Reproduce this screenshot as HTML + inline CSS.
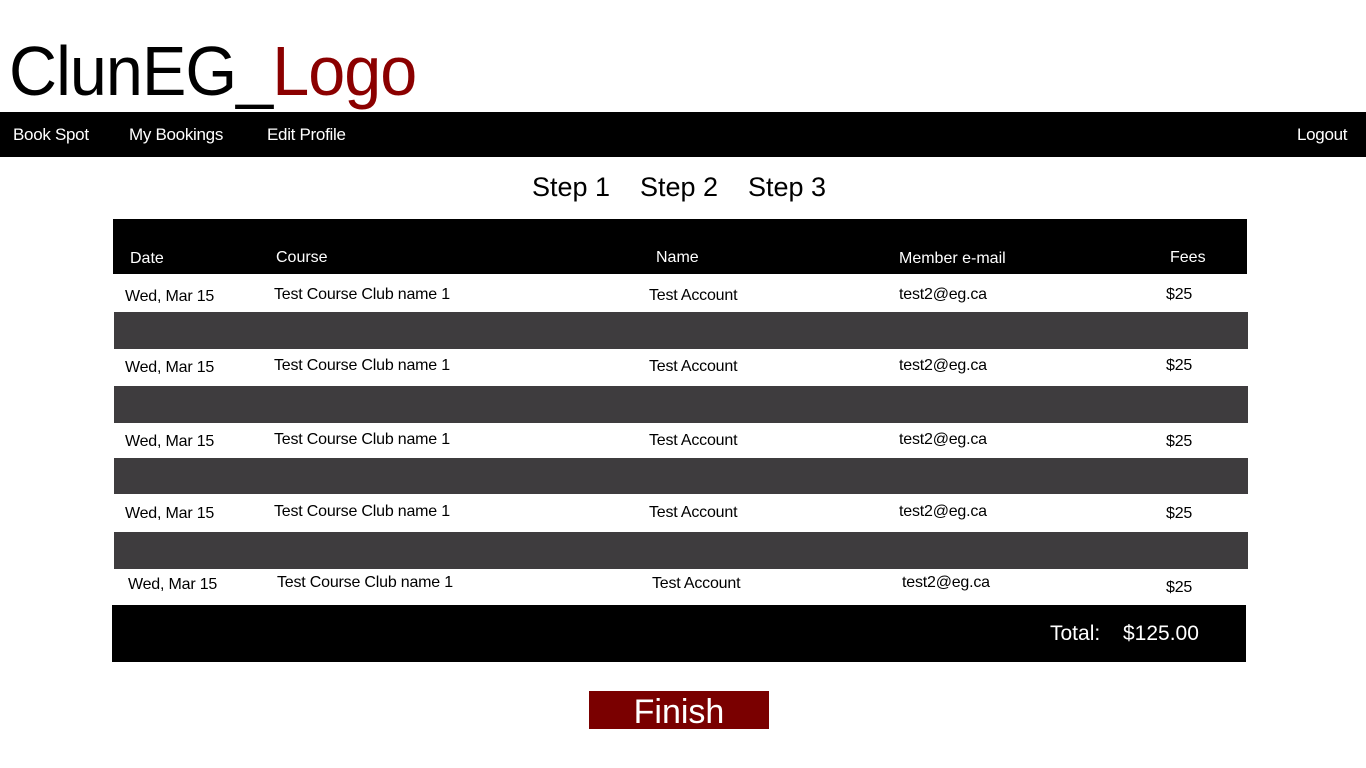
<!DOCTYPE html>
<html><head><meta charset="utf-8"><style>
body{margin:0;width:1366px;height:768px;background:#fff;position:relative;overflow:hidden;font-family:"Liberation Sans",sans-serif;}
.a{position:absolute;white-space:nowrap;}
.logo{left:9px;top:29px;font-size:70px;line-height:84px;color:#000;letter-spacing:-1px;transform:scaleX(0.95);transform-origin:0 0;}
.logo span{color:#8b0000;}
.nav{left:0;top:112px;width:1366px;height:45px;background:#000;}
.nl{color:#fff;font-size:17px;top:125px;letter-spacing:-0.3px;}
.steps{top:172px;font-size:27px;color:#000;}
.blk{background:#000;}
.gry{background:#3e3c3e;}
.h{color:#fff;font-size:16px;}
.t{color:#000;font-size:16px;letter-spacing:-0.2px;}
.fin{left:589px;top:691px;width:180px;height:38px;background:#7a0000;color:#fff;font-size:34px;text-align:center;line-height:43px;}
</style></head><body>
<div class="a logo">ClunEG_<span>Logo</span></div>
<div class="a nav"></div>
<div class="a nl" style="left:13px">Book Spot</div>
<div class="a nl" style="left:129px">My Bookings</div>
<div class="a nl" style="left:267px">Edit Profile</div>
<div class="a nl" style="left:1297px">Logout</div>
<div class="a steps" style="left:532px">Step 1</div>
<div class="a steps" style="left:640px">Step 2</div>
<div class="a steps" style="left:748px">Step 3</div>

<div class="a blk" style="left:113px;top:219px;width:1134px;height:55px"></div>
<div class="a h" style="left:130px;top:250px">Date</div>
<div class="a h" style="left:276px;top:249px">Course</div>
<div class="a h" style="left:656px;top:249px">Name</div>
<div class="a h" style="left:899px;top:250px">Member e-mail</div>
<div class="a h" style="left:1170px;top:249px">Fees</div>

<div class="a gry" style="left:114px;top:312px;width:1134px;height:37px"></div>
<div class="a gry" style="left:114px;top:386px;width:1134px;height:37px"></div>
<div class="a gry" style="left:114px;top:458px;width:1134px;height:36px"></div>
<div class="a gry" style="left:114px;top:532px;width:1134px;height:37px"></div>

<div class="a t" style="left:125px;top:288px">Wed, Mar 15</div>
<div class="a t" style="left:274px;top:286px">Test Course Club name 1</div>
<div class="a t" style="left:649px;top:287px">Test Account</div>
<div class="a t" style="left:899px;top:286px">test2@eg.ca</div>
<div class="a t" style="left:1166px;top:286px">$25</div>

<div class="a t" style="left:125px;top:359px">Wed, Mar 15</div>
<div class="a t" style="left:274px;top:357px">Test Course Club name 1</div>
<div class="a t" style="left:649px;top:358px">Test Account</div>
<div class="a t" style="left:899px;top:357px">test2@eg.ca</div>
<div class="a t" style="left:1166px;top:357px">$25</div>

<div class="a t" style="left:125px;top:433px">Wed, Mar 15</div>
<div class="a t" style="left:274px;top:431px">Test Course Club name 1</div>
<div class="a t" style="left:649px;top:432px">Test Account</div>
<div class="a t" style="left:899px;top:431px">test2@eg.ca</div>
<div class="a t" style="left:1166px;top:433px">$25</div>

<div class="a t" style="left:125px;top:505px">Wed, Mar 15</div>
<div class="a t" style="left:274px;top:503px">Test Course Club name 1</div>
<div class="a t" style="left:649px;top:504px">Test Account</div>
<div class="a t" style="left:899px;top:503px">test2@eg.ca</div>
<div class="a t" style="left:1166px;top:505px">$25</div>

<div class="a t" style="left:128px;top:576px">Wed, Mar 15</div>
<div class="a t" style="left:277px;top:574px">Test Course Club name 1</div>
<div class="a t" style="left:652px;top:575px">Test Account</div>
<div class="a t" style="left:902px;top:574px">test2@eg.ca</div>
<div class="a t" style="left:1166px;top:579px">$25</div>

<div class="a blk" style="left:112px;top:605px;width:1134px;height:57px"></div>
<div class="a" style="left:1050px;top:622px;color:#fff;font-size:21px">Total:</div>
<div class="a" style="left:1123px;top:622px;color:#fff;font-size:21px">$125.00</div>

<div class="a fin">Finish</div>
</body></html>
